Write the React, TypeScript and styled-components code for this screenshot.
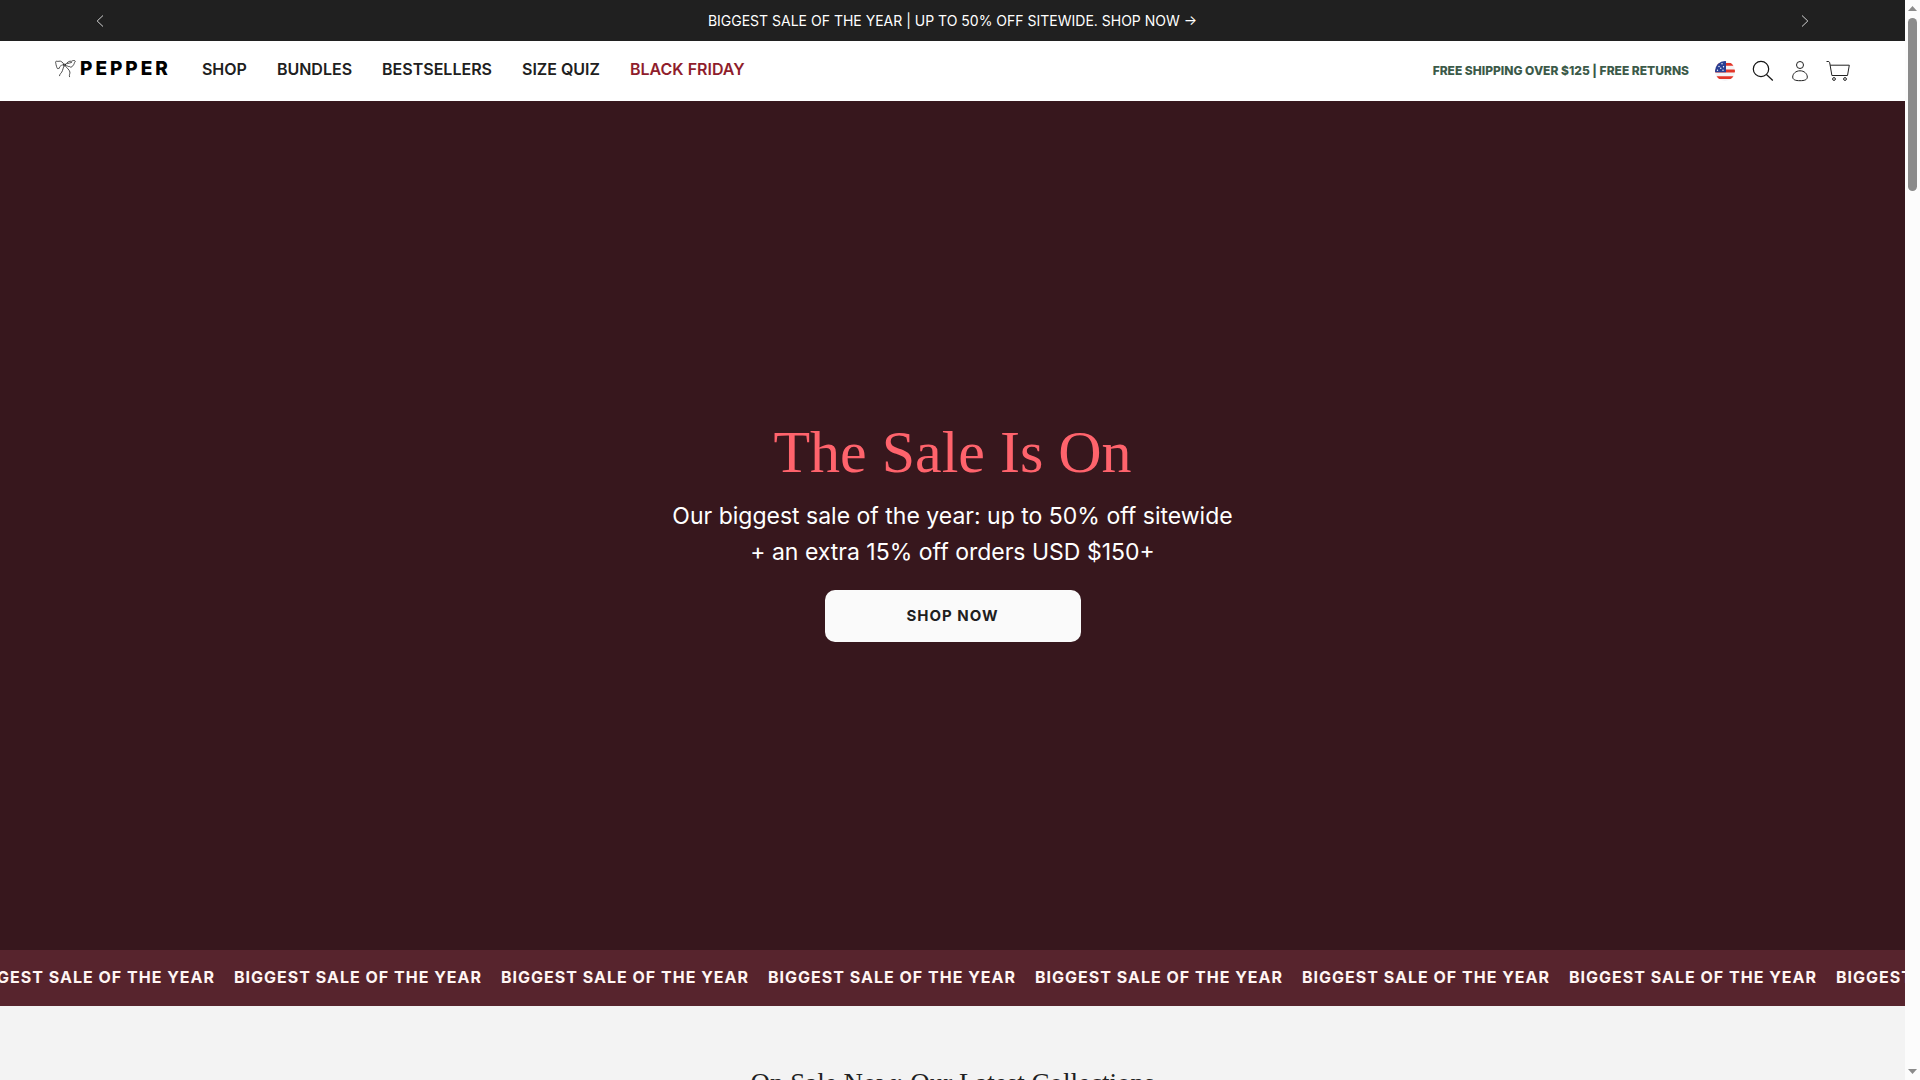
import React from "react";
import styled, { createGlobalStyle } from "styled-components";

const sans = `Inter, "Liberation Sans", sans-serif`;
const serif = `"Liberation Serif", "Times New Roman", serif`;

const GlobalStyle = createGlobalStyle`
  *, *::before, *::after { box-sizing: border-box; }
  html, body { margin: 0; }
  body { background: #f3f3f3; color: #202020; font-family: ${sans}; overflow: hidden; }
  h1, h2, p, ul { margin: 0; padding: 0; }
  ul { list-style: none; }
  a { color: inherit; text-decoration: none; }
  button { font: inherit; color: inherit; border: 0; background: none; padding: 0; cursor: pointer; }
  svg { display: block; }
`;

const Window = styled.div`
  display: grid;
  grid-template-columns: minmax(0, 1fr) 15px;
  height: 100vh;
  overflow: hidden;
`;

const Page = styled.div`
  display: flex;
  flex-direction: column;
  min-width: 0;
  overflow: hidden;
`;

const Announcement = styled.section`
  display: flex;
  flex: none;
  align-items: center;
  justify-content: space-between;
  height: 41px;
  padding: 0 88px;
  background: #202020;
  color: #fff;
  font-size: 14px;
  line-height: 20px;
`;

const ArrowButton = styled.button`
  display: grid;
  place-items: center;
  width: 24px;
  height: 24px;
`;

const Header = styled.header`
  display: flex;
  flex: none;
  align-items: center;
  justify-content: space-between;
  height: 60px;
  padding: 0 55px;
  background: #fff;
`;

const HeaderGroup = styled.div<{ $gap: number }>`
  display: flex;
  align-items: center;
  gap: ${(p) => p.$gap}px;
`;

const Logo = styled.a`
  display: flex;
  align-items: center;
  gap: 4px;
  padding-bottom: 4px;
  color: #000;
  font: 800 19px/24px ${sans};
  letter-spacing: 3px;
`;

const NavList = styled.ul`
  display: flex;
  gap: 30px;
  padding-bottom: 4px;
`;

const NavLink = styled.a<{ $sale?: boolean }>`
  color: ${(p) => (p.$sale ? "#8f1d2c" : "#202020")};
  font-size: 16px;
  font-weight: 600;
  line-height: 24px;
`;

const Perks = styled.p`
  color: #3c5a49;
  font-size: 12px;
  font-weight: 800;
  line-height: 20px;
`;

const Tools = styled.div`
  display: flex;
  align-items: center;
  gap: 17px;
`;

const Hero = styled.section`
  display: flex;
  flex: none;
  flex-direction: column;
  align-items: center;
  justify-content: center;
  height: calc(100vh - 231px);
  padding-top: 2px;
  background: #37171d;
  color: #fff;
  text-align: center;
`;

const HeroTitle = styled.h1`
  color: #ff636c;
  font: 400 60px/80px ${serif};
`;

const HeroText = styled.p`
  padding: 6px 0 20px;
  font-size: 23px;
  line-height: 36px;
`;

const ShopLink = styled.a`
  display: grid;
  place-items: center;
  width: 256px;
  height: 52px;
  border-radius: 10px;
  background: #fafafa;
  color: #202020;
  font-size: 15px;
  font-weight: 700;
  line-height: 20px;
  letter-spacing: 1px;
`;

const Ticker = styled.section`
  flex: none;
  height: 56px;
  overflow: hidden;
  background: #57242d;
`;

const TickerTrack = styled.ul`
  display: flex;
  align-items: center;
  height: 54px;
  margin-left: -33px;
`;

const TickerItem = styled.li`
  flex: none;
  width: 267px;
  color: #fff5f3;
  font-size: 16px;
  font-weight: 700;
  line-height: 24px;
  letter-spacing: 1px;
  white-space: nowrap;
`;

const Collections = styled.section`
  flex: none;
  padding: 60px 24px;
  text-align: center;
`;

const CollectionsTitle = styled.h2`
  font: 400 27px/34px ${serif};
`;

const Scrollbar = styled.div`
  display: flex;
  flex-direction: column;
  align-items: center;
  padding: 6px 0;
  background: #fcfcfc;
`;

const ScrollArrow = styled.span<{ $down?: boolean }>`
  width: 9px;
  height: 5px;
  background: #8b8b8b;
  clip-path: ${(p) => (p.$down ? "polygon(0 0, 100% 0, 50% 100%)" : "polygon(50% 0, 100% 100%, 0 100%)")};
  margin-top: ${(p) => (p.$down ? "auto" : "0")};
`;

const ScrollThumb = styled.span`
  width: 9px;
  height: 16vh;
  margin-top: 7px;
  border-radius: 5px;
  background: #8b8b8b;
`;

const Chevron = ({ next }: { next?: boolean }) => (
  <svg width="8" height="12" viewBox="0 0 8 12" fill="none" stroke="#fff" strokeWidth=".8">
    <path d={next ? "M1 .5 6.8 6 1 11.5" : "M7 .5 1.2 6 7 11.5"} />
  </svg>
);

const Bow = () => (
  <svg width="21" height="18" viewBox="0 0 21 18" fill="none" stroke="#222" strokeWidth=".8" strokeLinecap="round" strokeLinejoin="round">
    <path d="M9 4.600C8 2.500 6 .6 4 1.200 2.800 1.800 1.500.8.8 1.500.2 2.300 1 3.400 1 4.500c-.1 1.500 1 2 1 3.300C2.300 9 3.300 9 4.300 8" />
    <path d="M4.300 8C4.500 6.500 6 5 9 4.600" strokeDasharray="1.200 1" />
    <path d="M10.500 4.500C12 2.300 14.500.6 16.500 1.300c1.300-.9 3.300-1.200 3.700-.3.300.9-1 1.400-1 2.600 0 1.700-1.500 1.300-1.900 2.600-.5 1.300-1.900 1.200-2.600.4-1.100.4-2.900-.9-4.200-2.100Z" />
    <path d="M9 4.200h1.500v1.600H9zM9.200 5.800C8 7.600 8 10 6.800 12c-.7 1.400-1.900 1.600-2.300 3.700M10.400 5.800c1.200 2.500 4 3.600 4.500 6.200.3 1.800-1 2.600-.4 4.700M12.500 3.600c1.500-.2 2.500-1 4-1.200" />
  </svg>
);

const Flag = () => (
  <svg width="20" height="20" viewBox="0 0 20 20">
    <defs><clipPath id="round-flag"><circle cx="10" cy="10" r="10" /></clipPath></defs>
    <g clipPath="url(#round-flag)">
      <path fill="#f4f4f6" d="M0 0h20v20H0z" />
      <path fill="#e33528" d="M0 2h20v2.800H0zM0 8.600h20v2.800H0zM0 15.200h20V18H0z" />
      <path fill="#293f94" d="M0 0h11v11.300H0z" />
      <g fill="#fff">
        <circle cx="7" cy="2.800" r=".7" /><circle cx="4" cy="5.500" r=".7" /><circle cx="8.500" cy="5.800" r=".7" />
        <circle cx="5.800" cy="7.300" r=".7" /><circle cx="2.500" cy="9.300" r=".7" /><circle cx="8" cy="9.300" r=".7" />
      </g>
    </g>
  </svg>
);

const SearchIcon = () => (
  <svg width="22" height="22" viewBox="0 0 22 22" fill="none" stroke="#151515" strokeWidth="1.200">
    <circle cx="9" cy="9" r="7.700" /><path d="m14.500 14.500 6.300 6" />
  </svg>
);

const UserIcon = () => (
  <svg width="18" height="22" viewBox="0 0 18 22" fill="none" stroke="#222" strokeWidth="1">
    <circle cx="9" cy="5" r="3.500" />
    <path d="M9 10.800c-4.300 0-7.300 3-7.300 6.200 0 2.800 2.800 3.700 7.300 3.700s7.300-.9 7.300-3.700c0-3.200-3-6.200-7.300-6.200Z" />
  </svg>
);

const CartIcon = () => (
  <svg width="24" height="22" viewBox="0 0 24 22" fill="none" stroke="#222" strokeWidth="1">
    <path d="M.5 1.500h2.300l.9 1.200L5.900 15.500h15.600l1.800-10.300H4.200" />
    <circle cx="8" cy="19" r="1.400" /><circle cx="19" cy="19" r="1.400" />
  </svg>
);

const links = ["Shop", "Bundles", "Bestsellers", "Size Quiz", "Black Friday"];

export default function App() {
  return (
    <>
      <GlobalStyle />
      <Window>
        <Page>
          <Announcement aria-label="Announcements">
            <ArrowButton aria-label="Previous announcement"><Chevron /></ArrowButton>
            <a href="#sale">BIGGEST SALE OF THE YEAR | UP TO 50% OFF SITEWIDE. SHOP NOW →</a>
            <ArrowButton aria-label="Next announcement"><Chevron next /></ArrowButton>
          </Announcement>
          <Header>
            <HeaderGroup $gap={31}>
              <Logo href="#home"><Bow />PEPPER</Logo>
              <nav aria-label="Main">
                <NavList>
                  {links.map((label) => (
                    <li key={label}>
                      <NavLink href="#menu" $sale={label === "Black Friday"}>{label.toUpperCase()}</NavLink>
                    </li>
                  ))}
                </NavList>
              </nav>
            </HeaderGroup>
            <HeaderGroup $gap={26}>
              <Perks>FREE SHIPPING OVER $125 | FREE RETURNS</Perks>
              <Tools>
                <button aria-label="Country"><Flag /></button>
                <button aria-label="Search"><SearchIcon /></button>
                <button aria-label="Account"><UserIcon /></button>
                <button aria-label="Cart"><CartIcon /></button>
              </Tools>
            </HeaderGroup>
          </Header>
          <main>
            <Hero id="sale">
              <HeroTitle>The Sale Is On</HeroTitle>
              <HeroText>
                Our biggest sale of the year: up to 50% off sitewide<br />+ an extra 15% off orders USD $150+
              </HeroText>
              <ShopLink href="#shop">SHOP NOW</ShopLink>
            </Hero>
            <Ticker aria-label="Sale">
              <TickerTrack>
                {Array.from({ length: 8 }, (_, i) => (
                  <TickerItem key={i}>BIGGEST SALE OF THE YEAR</TickerItem>
                ))}
              </TickerTrack>
            </Ticker>
            <Collections>
              <CollectionsTitle>On Sale Now: Our Latest Collections</CollectionsTitle>
            </Collections>
          </main>
        </Page>
        <Scrollbar aria-hidden="true">
          <ScrollArrow />
          <ScrollThumb />
          <ScrollArrow $down />
        </Scrollbar>
      </Window>
    </>
  );
}
